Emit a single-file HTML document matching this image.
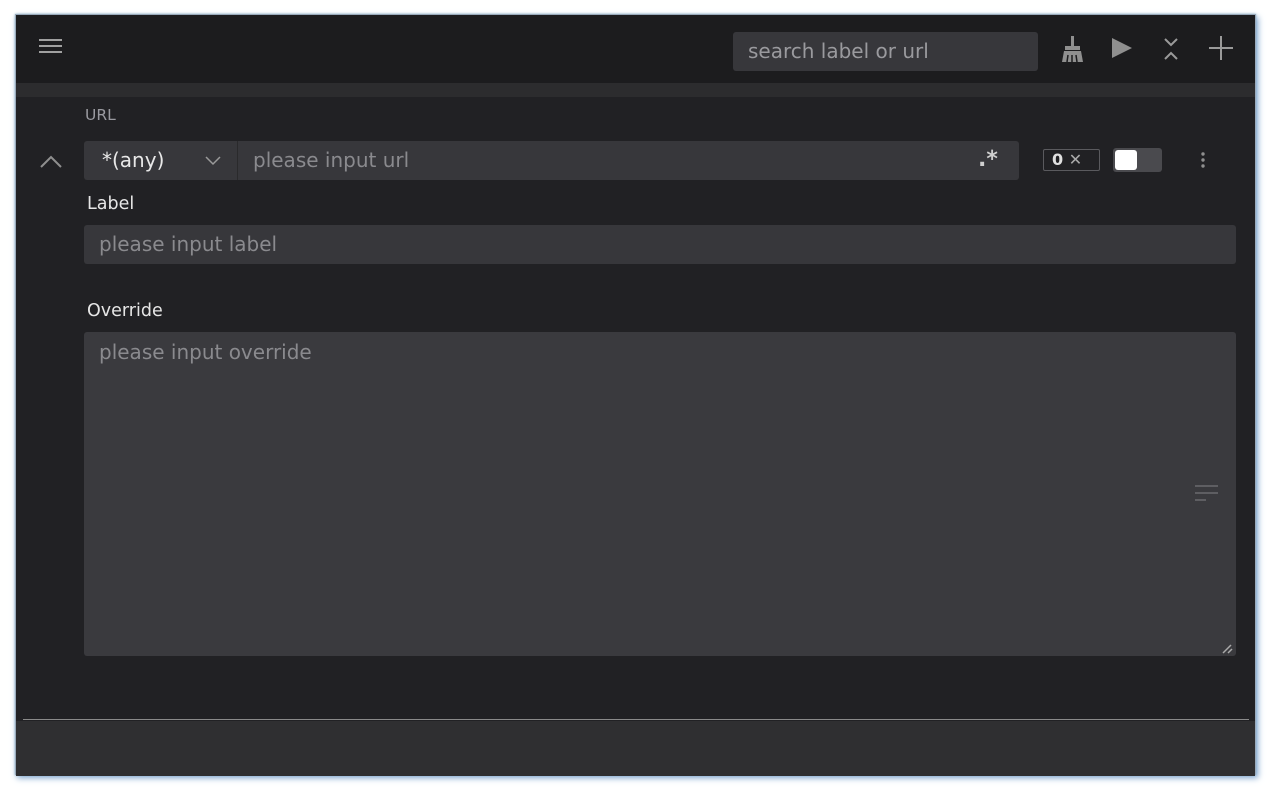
<!DOCTYPE html>
<html><head><style>
*{box-sizing:border-box;margin:0;padding:0}
body{width:1280px;height:800px;background:#fff;font-family:"DejaVu Sans","Liberation Sans",sans-serif;position:relative;overflow:hidden}
.win{position:absolute;left:15px;top:14px;width:1241px;height:761px;background:#212124;box-shadow:2px 3px 6px #7fa6cf,0 0 2px #8ab;border:1px solid #9ab}
.hdr{position:absolute;left:0;top:0;width:100%;height:68px;background:#1c1c1e}
.band{position:absolute;left:0;top:68px;width:100%;height:14px;background:#2c2c2e}
.abs{position:absolute}
.in{background:#37373b;border-radius:3px}
.ph{color:#8a8a8e;font-size:20px}
.lbl{color:#e6e6e6;font-size:17.5px}
</style></head><body>
<div class="win">
 <div class="hdr">
  <svg class="abs" style="left:22px;top:22px" width="26" height="18"><g stroke="#a0a0a0" stroke-width="2"><line x1="1" y1="3" x2="24" y2="3"/><line x1="1" y1="9" x2="24" y2="9"/><line x1="1" y1="15" x2="24" y2="15"/></g></svg>
  <div class="abs in" style="left:717px;top:17px;width:305px;height:39px"><span class="ph abs" style="left:15px;top:7px;color:#9a9a9e">search label or url</span></div>
  <svg class="abs" style="left:1044px;top:20px" width="26" height="28"><g fill="#8f8f8f"><rect x="11" y="1" width="3" height="11"/><rect x="5" y="11" width="15" height="4"/><path d="M4 16h17l2 11H2z"/></g><g stroke="#1c1c1e" stroke-width="1.5"><line x1="8" y1="20" x2="7" y2="27"/><line x1="12" y1="20" x2="12" y2="27"/><line x1="16" y1="20" x2="17" y2="27"/></g></svg>
  <svg class="abs" style="left:1094px;top:21px" width="24" height="24"><path d="M2 2L22 12L2 22z" fill="#8f8f8f"/></svg>
  <svg class="abs" style="left:1146px;top:22px" width="18" height="24"><g stroke="#9a9a9a" stroke-width="2" fill="none"><path d="M3 2l6 6 6-6"/><path d="M3 22l6-6 6 6"/></g></svg>
  <svg class="abs" style="left:1192px;top:20px" width="26" height="26"><g stroke="#9a9a9a" stroke-width="2"><line x1="13" y1="1" x2="13" y2="25"/><line x1="1" y1="13" x2="25" y2="13"/></g></svg>
 </div>
 <div class="band"></div>
 <div class="abs" style="left:69px;top:91px;color:#9a9aa0;font-size:15.5px">URL</div>
 <svg class="abs" style="left:23px;top:140px" width="24" height="14"><path d="M2 12l10-10 10 10" stroke="#8f8f8f" stroke-width="2" fill="none"/></svg>
 <div class="abs in" style="left:68px;top:126px;width:935px;height:39px">
  <span class="abs" style="left:18px;top:7px;color:#e8e8e8;font-size:20px">*(any)</span>
  <svg class="abs" style="left:121px;top:15px" width="16" height="10"><path d="M1 1l7 7 7-7" stroke="#9a9a9a" stroke-width="1.5" fill="none"/></svg>
  <div class="abs" style="left:153px;top:0;width:1px;height:39px;background:#2a2a2c"></div>
  <span class="ph abs" style="left:169px;top:7px">please input url</span>
  <span class="abs" style="left:894px;top:6px;color:#cfcfcf;font-size:22px;font-weight:bold">.*</span>
 </div>
 <div class="abs" style="left:1027px;top:134px;width:57px;height:22px;border:1px solid #5a5a5e;border-radius:2px;color:#e0e0e0;font-size:16px;line-height:20px;padding-left:8px;font-weight:bold">0 <span style="color:#aaa;font-weight:normal">✕</span></div>
 <div class="abs" style="left:1097px;top:133px;width:49px;height:24px;background:#4a4a4e;border-radius:3px"><div class="abs" style="left:2px;top:2px;width:22px;height:20px;background:#fff;border-radius:3px"></div></div>
 <svg class="abs" style="left:1184px;top:136px" width="6" height="18"><g fill="#8f8f8f"><circle cx="3" cy="3" r="1.7"/><circle cx="3" cy="9" r="1.7"/><circle cx="3" cy="15" r="1.7"/></g></svg>
 <div class="abs lbl" style="left:71px;top:179px">Label</div>
 <div class="abs in" style="left:68px;top:210px;width:1152px;height:39px"><span class="ph abs" style="left:15px;top:7px">please input label</span></div>
 <div class="abs lbl" style="left:71px;top:286px">Override</div>
 <div class="abs in" style="left:68px;top:317px;width:1152px;height:324px;background:#3a3a3e">
  <span class="ph abs" style="left:15px;top:8px">please input override</span>
  <svg class="abs" style="left:1110px;top:152px" width="26" height="20"><g stroke="#5e5e62" stroke-width="2"><line x1="1" y1="2" x2="24" y2="2"/><line x1="1" y1="9" x2="24" y2="9"/><line x1="1" y1="16" x2="12" y2="16"/></g></svg>
  <svg class="abs" style="left:1138px;top:312px" width="12" height="10"><g stroke="#aaa" stroke-width="1.5"><line x1="1" y1="9" x2="9" y2="1"/><line x1="6" y1="9" x2="10" y2="5"/></g></svg>
 </div>
 <div class="abs" style="left:7px;top:704px;width:1226px;height:1px;background:#8a8a8a"></div>
 <div class="abs" style="left:0;top:706px;width:100%;height:55px;background:#2f2f31"></div>
</div>
</body></html>
